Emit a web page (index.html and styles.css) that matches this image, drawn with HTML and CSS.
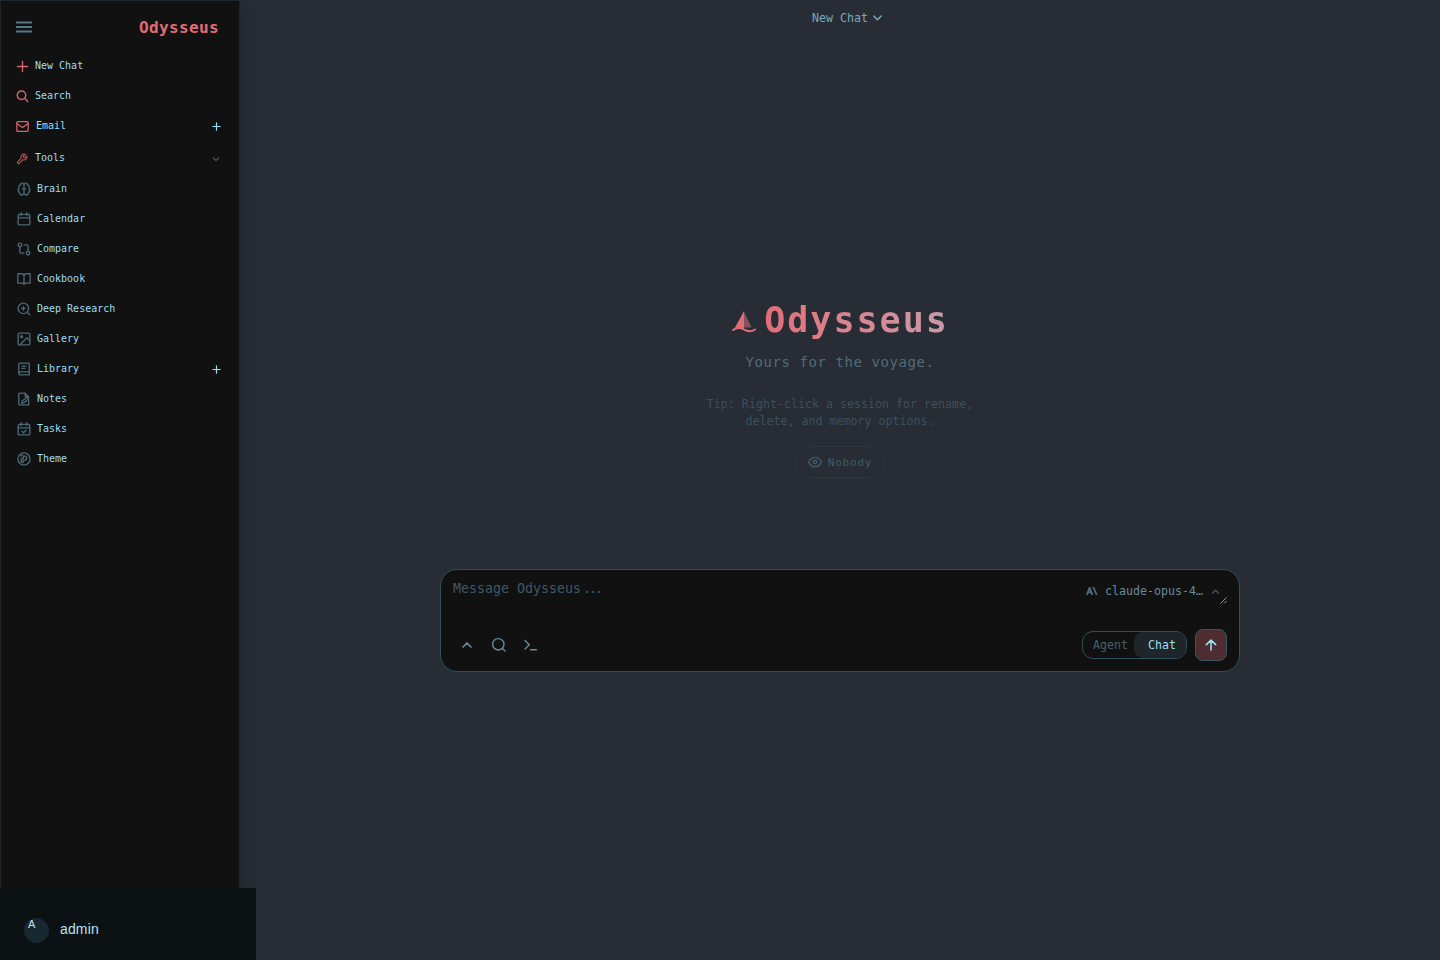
FILE: index.html
```html
<!DOCTYPE html>
<html lang="en">
<head>
<meta charset="utf-8">
<title>Odysseus</title>
<link rel="stylesheet" href="styles.css">
</head>
<body>
<div class="app">
  <aside class="sidebar">
    <div class="side-head">
      <svg class="burger" width="16" height="12" viewBox="0 0 16 12"><path d="M0 1.500h16M0 6h16M0 10.500h16"/></svg>
      <span class="brand">Odysseus</span>
    </div>
    <nav class="main-nav">
      <a class="item"><svg class="icon" viewBox="0 0 24 24"><path d="M13 3v20M3 13h20"/></svg><span>New Chat</span></a>
      <a class="item"><svg class="icon" viewBox="0 0 24 24"><circle cx="11" cy="10.500" r="8.500"/><path d="M23.500 23l-6.300-6.300"/></svg><span>Search</span></a>
      <a class="item email"><svg class="icon" viewBox="0 0 24 24"><rect x="1.500" y="3" width="21" height="18" rx="2"/><path d="M22 7l-10 7L2 7"/></svg><span>Email</span><svg class="add" viewBox="0 0 9 9"><path d="M4.500 .8v7.400M.8 4.500h7.400"/></svg></a>
      <a class="item tools"><svg class="icon" viewBox="0 0 24 24"><path d="M14.700 6.300a1 1 0 0 0 0 1.400l1.600 1.600a1 1 0 0 0 1.400 0l3.770-3.770a6 6 0 0 1-7.940 7.940l-6.910 6.910a2.120 2.120 0 0 1-3-3l6.910-6.910a6 6 0 0 1 7.940-7.940l-3.760 3.760z"/></svg><span>Tools</span><svg class="chev" viewBox="0 0 8 8"><path d="M1.200 2.700L4 5.500l2.800-2.800"/></svg></a>
    </nav>
    <nav class="tool-nav">
      <a class="item"><svg class="icon" viewBox="0 0 24 24"><path d="M12 5a3 3 0 1 0-6 .1 4 4 0 0 0-2.500 5.800 4 4 0 0 0 .6 6.600A4 4 0 1 0 12 18zM12 5a3 3 0 1 1 6 .1 4 4 0 0 1 2.500 5.800 4 4 0 0 1-.6 6.600A4 4 0 1 1 12 18zM9.500 12h5"/></svg><span>Brain</span></a>
      <a class="item"><svg class="icon" viewBox="0 0 24 24"><rect x="2" y="4" width="20" height="18" rx="2"/><path d="M2 10h20M7 1v5M17 1v5"/></svg><span>Calendar</span></a>
      <a class="item"><svg class="icon" viewBox="0 0 24 24"><circle cx="5" cy="5" r="3"/><circle cx="19" cy="19" r="3"/><path d="M12 5h5a2 2 0 0 1 2 2v9M12 19H7a2 2 0 0 1-2-2V8"/></svg><span>Compare</span></a>
      <a class="item"><svg class="icon" viewBox="0 0 24 24"><path d="M1.500 3h6.500a4 4 0 0 1 4 4v14.500a3 3 0 0 0-3-2.500H1.500zM22.500 3H16a4 4 0 0 0-4 4v14.500a3 3 0 0 1 3-2.500h7.500z"/></svg><span>Cookbook</span></a>
      <a class="item"><svg class="icon" viewBox="0 0 24 24"><circle cx="11" cy="11" r="9"/><path d="M22 22l-4.500-4.500M11 8v6M8 11h6"/></svg><span>Deep Research</span></a>
      <a class="item"><svg class="icon" viewBox="0 0 24 24"><rect x="2" y="2" width="20" height="20" rx="2"/><circle cx="8" cy="8" r="1.500"/><path d="M22 15l-5-5L5 22"/></svg><span>Gallery</span></a>
      <a class="item"><svg class="icon" viewBox="0 0 24 24"><path d="M3 19.500V4.500A2.500 2.500 0 0 1 5.500 2H21v20H5.500a2.500 2.500 0 0 1 0-5H21M8.500 7h7M8.500 11h5"/></svg><span>Library</span><svg class="add" viewBox="0 0 9 9"><path d="M4.500 .8v7.400M.8 4.500h7.400"/></svg></a>
      <a class="item"><svg class="icon" viewBox="0 0 24 24"><path d="M20 22H5a2 2 0 0 1-2-2V4a2 2 0 0 1 2-2h9l6 6M14 2v6h6v1M8 19l1-4 9-6 2 3-8 6zM20 15v7"/></svg><span>Notes</span></a>
      <a class="item"><svg class="icon" viewBox="0 0 24 24"><rect x="2" y="4" width="20" height="18" rx="2"/><path d="M2 10h20M7 1v5M17 1v5M8.500 16l2.500 2.500 4.500-4.500"/></svg><span>Tasks</span></a>
      <a class="item"><svg class="icon" viewBox="0 0 24 24"><circle cx="12" cy="12" r="10.500"/><path d="M7 17v-5l4-1V7h4l2 3-2 4h-4l-1 4zM7 7l2-2"/></svg><span>Theme</span></a>
    </nav>
    <div class="user"><span class="avatar">A</span><span class="name">admin</span></div>
  </aside>
  <main class="main">
    <header class="top"><span>New Chat</span><svg width="9" height="6" viewBox="0 0 9 6"><path d="M.8 1l3.700 3.700L8.200 1"/></svg></header>
    <section class="welcome">
      <div class="hero">
        <svg class="boat" width="26" height="23" viewBox="0 0 26 23"><path d="M13 1v18C10 17.300 7 17 3.500 18.500z" fill="#e06c75"/><path d="M13 1.500v16h7.500z" fill="#84525f"/><path d="M2 20C7 16.500 10.500 18 14 20c4 2 7 1.500 10-.5" fill="none" stroke="#e06c75" stroke-width="2" stroke-linecap="round"/></svg>
        <h1>Odysseus</h1>
      </div>
      <p class="tagline">Yours for the voyage.</p>
      <p class="tip">Tip: Right-click a session for rename,<br>delete, and memory options.</p>
      <button class="nobody"><svg width="14" height="14" viewBox="0 0 24 24"><path d="M1 12s4-8 11-8 11 8 11 8-4 8-11 8S1 12 1 12z"/><circle cx="12" cy="12" r="3"/></svg><span>Nobody</span></button>
    </section>
    <section class="composer">
      <div class="row prompt">
        <span class="placeholder">Message Odysseus<span class="dots">...</span></span>
        <div class="model">
          <svg class="ai" width="12" height="8" viewBox="0 0 12 8"><path d="M.8 8L3.600.6 6.400 8M2 5.400h3.300M7.200 0l3.600 8"/></svg>
          <span>claude-opus-4…</span>
          <svg class="up" width="7" height="5" viewBox="0 0 7 5"><path d="M.7 4L3.500 1.200 6.300 4"/></svg>
        </div>
        <svg class="grip" width="7" height="7" viewBox="0 0 7 7"><path d="M.5 6.500l6-6M4 6.500L6.500 4"/></svg>
      </div>
      <div class="row actions">
        <svg width="16" height="16" viewBox="0 0 16 16"><path d="M4 10l4-4 4 4" stroke-width="1.700"/></svg>
        <svg width="16" height="16" viewBox="0 0 16 16"><circle cx="7.300" cy="7.300" r="5.700"/><path d="M11.500 11.500l2.500 2.500"/></svg>
        <svg width="16" height="16" viewBox="0 0 16 16"><path d="M2 3.500L6.300 7.700 2 12M7.500 12.700H13.500"/></svg>
        <div class="mode"><span>Agent</span><span class="on">Chat</span></div>
        <button class="send"><svg width="12" height="12" viewBox="0 0 12 12"><path d="M6 11V1.200M1.300 5.700L6 1.200l4.700 4.500"/></svg></button>
      </div>
    </section>
  </main>
</div>
</body>
</html>
```
FILE: styles.css
```css
* { box-sizing: border-box; }
body { margin: 0; background: #282c34; color: #9cdef2; font-family: "DejaVu Sans Mono", monospace; }
svg { display: block; flex: none; fill: none; stroke: currentColor; stroke-linecap: round; stroke-linejoin: round; }
h1, p { margin: 0; }
button { font: inherit; padding: 0; background: none; }
.app { display: flex; width: 1440px; height: 960px; overflow: hidden; }

.sidebar { position: relative; width: 240px; flex: none; background: #111; border: 1px solid #1d272b; box-shadow: 2px 0 12px rgba(0, 0, 0, .14); }
.side-head { display: flex; align-items: center; justify-content: space-between; height: 50px; padding: 3px 20px 0 15px; }
.burger { margin-bottom: 2px; color: #55798a; stroke-width: 2; stroke-linecap: butt; }
.brand { color: #e06c75; font-size: 16px; font-weight: bold; letter-spacing: .37px; }
.item { display: flex; align-items: center; height: 30px; padding: 0 18px 0 15px; font-size: 10px; }
.item > span { position: relative; top: -1px; margin-left: 7px; }
.icon { width: 12px; height: 12px; color: #d7656e; stroke-width: 2.800; overflow: visible; }
.add { width: 9px; height: 9px; margin-left: auto; stroke-width: 1.200; }
.email .icon { width: 13px; height: 13px; stroke-width: 2.300; }
.tools { height: 33px; padding-right: 19px; }
.tools > span { top: 0; }
.tools .icon { position: relative; top: 1px; color: #b8585f; stroke-width: 2.200; }
.chev { position: relative; top: 1px; width: 8px; height: 8px; margin-left: auto; color: #40555e; stroke-width: 1.300; }
.tool-nav .item { padding-left: 16px; }
.tool-nav .icon { width: 14px; height: 14px; color: #4b6975; stroke-width: 2.300; }
.tool-nav .item > span { margin-left: 6px; }
.user { position: absolute; left: -1px; bottom: -1px; display: flex; align-items: center; gap: 11px; width: 256px; height: 72px; padding: 12px 24px 0; background: #0c1114; color: #b9e4ed; font: 14px "Liberation Sans", sans-serif; }
.name { margin-bottom: 2px; letter-spacing: .15px; }
.avatar { width: 25px; height: 25px; padding: 0 4px; border-radius: 50%; background: #172831; font-size: 11px; }

.main { flex: 1; display: flex; flex-direction: column; }
.top { display: flex; justify-content: center; align-items: center; gap: 5px; height: 36px; padding-left: 14px; color: #79a9ba; font-size: 11.600px; stroke-width: 1.500; }
.welcome { display: flex; flex-direction: column; align-items: center; height: 533px; padding-top: 264px; }
.hero { display: flex; align-items: center; gap: 7px; height: 42px; }
.boat { stroke: none; }
.hero h1 { font-size: 35px; line-height: 42px; letter-spacing: 2px; margin-top: -2px; background: linear-gradient(90deg, #e06c75 0%, #df7982 20%, #ca9aaa 100%); background-clip: text; -webkit-background-clip: text; color: transparent; }
.tagline { margin-top: 10px; color: #4f6c79; font-size: 14px; line-height: 20px; letter-spacing: .58px; }
.tip { margin-top: 24px; color: #3c505a; font-size: 11.650px; line-height: 17px; text-align: center; }
.nobody { display: flex; align-items: center; justify-content: center; gap: 6px; width: 90px; height: 32px; margin-top: 16px; border: 1px solid #2b3840; border-radius: 16px; color: #435a65; font-size: 11px; letter-spacing: .8px; stroke-width: 2.400; }

.composer { display: flex; flex-direction: column; justify-content: space-between; align-self: center; width: 800px; height: 103px; padding: 10px 12px; background: #111; border: 1px solid #2f4f5a; border-radius: 17px; color: #668b99; }
.row { display: flex; }
.prompt { position: relative; align-items: flex-start; justify-content: space-between; }
.placeholder { color: #3f5964; font-size: 13.300px; line-height: 18px; }
.dots { margin-left: 2px; letter-spacing: -2.200px; }
.model { display: flex; align-items: center; margin: 2px 8px 0 0; font-size: 11.650px; line-height: 18px; }
.ai { margin-right: 7px; stroke-width: 1.800; stroke-linecap: butt; color: #4d6a75; }
.up { margin-left: 9px; color: #46616c; stroke-width: 1.200; }
.grip { position: absolute; right: 0; top: 17px; color: #9a9a9a; stroke-width: 1; stroke-linecap: butt; }
.actions { align-items: center; gap: 16px; padding-left: 6px; stroke-width: 1.400; }
.mode { display: flex; width: 105px; height: 28px; margin-left: auto; border: 1px solid #2f4f5a; border-radius: 11px; overflow: hidden; font-size: 11.600px; line-height: 26px; color: #45606b; }
.mode span { width: 52px; padding-left: 10px; }
.mode .on { padding-left: 13.500px; background: #1e2629; color: #9cdef2; border-radius: 9px; }
.send { display: flex; align-items: center; justify-content: center; width: 32px; height: 32px; margin-left: -8px; background: #4f2c30; border: 1px solid #365763; border-radius: 8px; color: #9cdef2; stroke-width: 1.600; }
```
